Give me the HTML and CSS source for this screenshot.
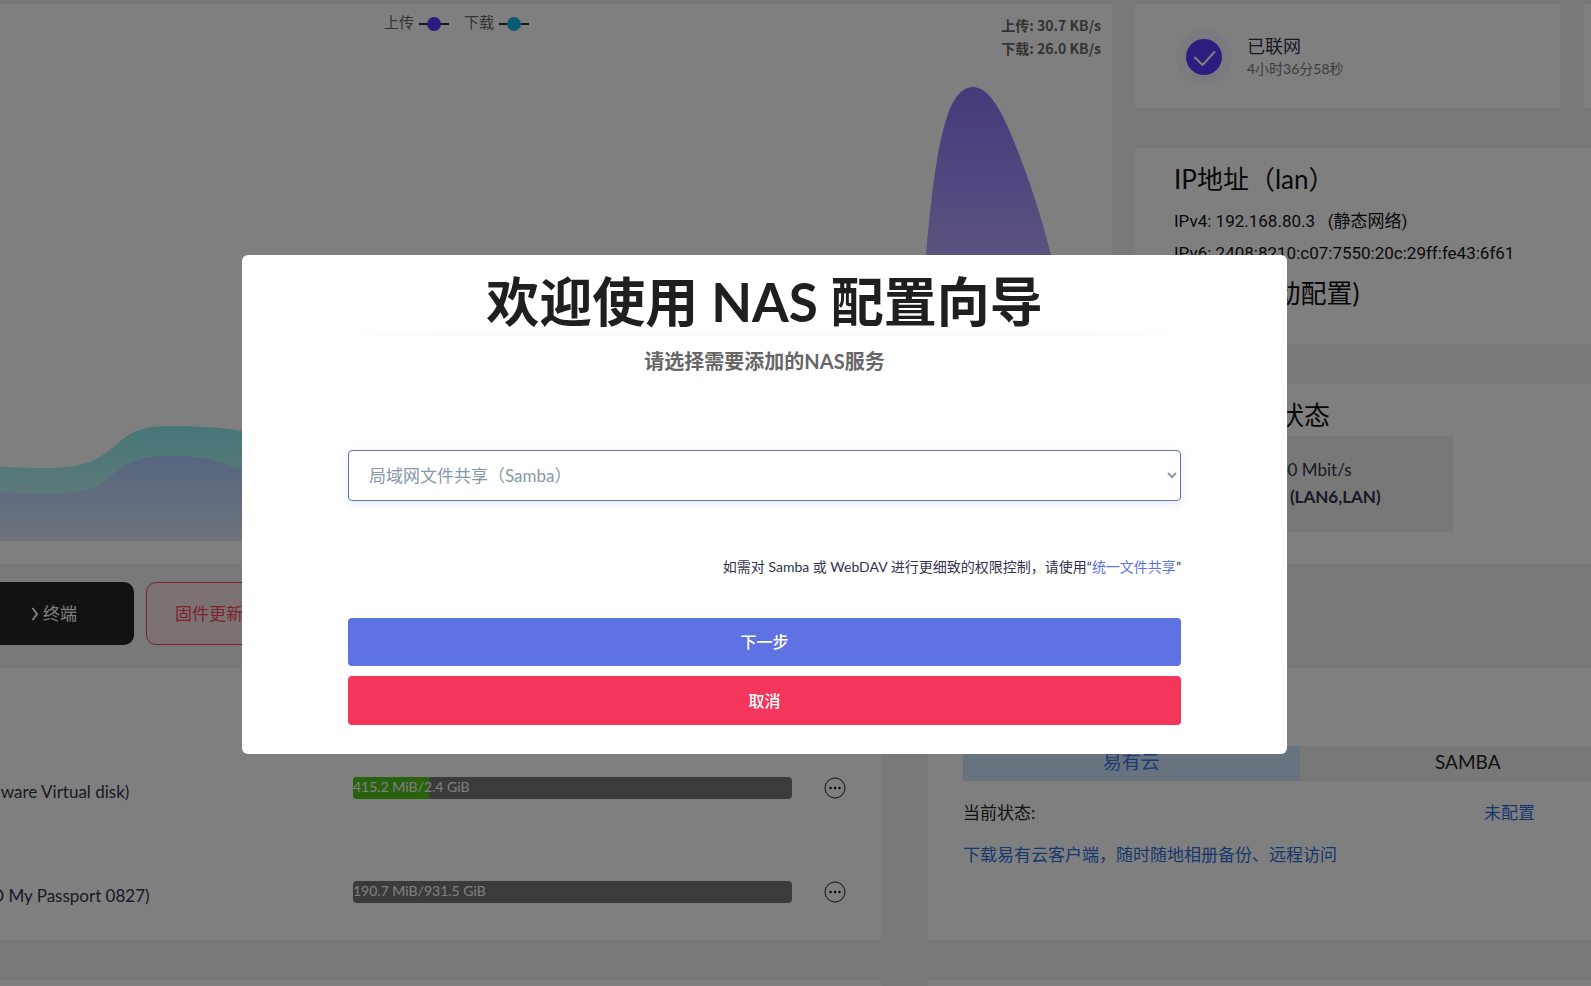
FILE: index.html
```html
<!DOCTYPE html>
<html lang="zh-CN">
<head>
<meta charset="utf-8">
<meta name="viewport" content="width=device-width, initial-scale=1">
<title>NAS 配置向导</title>
<link rel="stylesheet" href="styles.css">
</head>
<body>
<div class="viewport">
<main class="page">
  <div class="overview">
    <section class="card traffic">
      <svg class="traffic-chart" viewBox="-36 4 1148 560" preserveAspectRatio="none" aria-hidden="true">
        <defs>
          <linearGradient id="peak" gradientUnits="userSpaceOnUse" x1="0" y1="87" x2="0" y2="541"><stop offset="0" stop-color="#8b74f8"/><stop offset="0.37" stop-color="#b9a5ff"/><stop offset="1" stop-color="#e6e0ff"/></linearGradient>
          <linearGradient id="down" gradientUnits="userSpaceOnUse" x1="0" y1="425" x2="0" y2="541"><stop offset="0" stop-color="#8eeeee"/><stop offset="1" stop-color="#d8f4fa"/></linearGradient>
          <linearGradient id="up" gradientUnits="userSpaceOnUse" x1="0" y1="456" x2="0" y2="541"><stop offset="0" stop-color="#aecaff"/><stop offset="1" stop-color="#dce8f6"/></linearGradient>
        </defs>
        <path fill="url(#down)" d="M-36 466C0 466 20 468 50 468C85 468 100 459 118 443C135 428 150 426 170 426C200 426 225 428 242 431C330 445 500 480 700 480V541H-36Z"/>
        <path fill="url(#up)" d="M-36 490C0 492 20 494 50 494C85 494 98 488 115 473C132 459 148 456 170 456C202 455 215 461 242 469C330 490 500 500 700 500V541H-36Z"/>
        <path fill="url(#peak)" d="M880 541C905 430 925 285 926 255C931 200 936 150 947 117C953 98 962 87 973 87C985 87 996 101 1006 123C1022 158 1040 210 1051 255C1070 340 1085 440 1112 541Z"/>
      </svg>
      <div class="legend">
        <span>上传</span><svg viewBox="0 0 30 16"><path d="M0 8H30"/><circle class="c-up" cx="15" cy="8" r="7"/></svg>
        <span class="legend-next">下载</span><svg viewBox="0 0 30 16"><path d="M0 8H30"/><circle class="c-down" cx="15" cy="8" r="7"/></svg>
      </div>
      <div class="rates"><div>上传: 30.7 KB/s</div><div>下载: 26.0 KB/s</div></div>
    </section>
    <div class="side">
      <div class="status-row">
        <section class="card status">
          <svg class="status-icon" viewBox="0 0 56 56" aria-hidden="true"><circle cx="28" cy="28" r="28" fill="#f7f4ff"/><circle cx="28" cy="28" r="18" fill="#5a3bff"/><path d="M19 28.500L26.500 36L38.500 23" fill="none" stroke="#fff" stroke-width="2" stroke-linecap="round" stroke-linejoin="round"/></svg>
          <div><div class="status-name">已联网</div><div class="status-time">4小时36分58秒</div></div>
        </section>
        <section class="card"></section>
      </div>
      <section class="card address">
        <h2>IP地址（lan）</h2>
        <p>IPv4: 192.168.80.3 &nbsp; (静态网络)</p>
        <p>IPv6: 2408:8210:c07:7550:20c:29ff:fe43:6f61</p>
        <h2>/64 （自动配置)</h2>
      </section>
      <section class="card ports">
        <h2>网络端口状态</h2>
        <div class="port"><div>1000 Mbit/s</div><div class="port-name"><b>eth</b><b>(LAN6,LAN)</b></div></div>
      </section>
    </div>
  </div>

  <div class="actions">
    <button class="action dark" type="button"><svg viewBox="0 0 8 14" aria-hidden="true"><path d="M1.500 1L6 7L1.500 13"/></svg>终端</button>
    <button class="action red" type="button">固件更新</button>
  </div>

  <div class="lower">
    <section class="card disks">
      <div class="disk">
        <div class="disk-name">(VMware Virtual disk)</div>
        <div class="bar"><div class="bar-fill" style="width:17.3%"></div><span>415.2 MiB/2.4 GiB</span></div>
        <button class="more" type="button" aria-label="更多"><svg viewBox="0 0 22 22"><circle class="ring" cx="11" cy="11" r="10"/><circle cx="6.500" cy="11" r="1.200"/><circle cx="11" cy="11" r="1.200"/><circle cx="15.500" cy="11" r="1.200"/></svg></button>
      </div>
      <div class="disk">
        <div class="disk-name">(WD My Passport 0827)</div>
        <div class="bar"><span>190.7 MiB/931.5 GiB</span></div>
        <button class="more" type="button" aria-label="更多"><svg viewBox="0 0 22 22"><circle class="ring" cx="11" cy="11" r="10"/><circle cx="6.500" cy="11" r="1.200"/><circle cx="11" cy="11" r="1.200"/><circle cx="15.500" cy="11" r="1.200"/></svg></button>
      </div>
    </section>
    <section class="card services">
      <div class="tabs"><button class="tab active" type="button">易有云</button><button class="tab" type="button">SAMBA</button></div>
      <div class="service-state"><span>当前状态:</span><a href="#">未配置</a></div>
      <a class="service-link" href="#">下载易有云客户端，随时随地相册备份、远程访问</a>
    </section>
    <section class="card next"></section>
    <section class="card next"></section>
  </div>
</main>
</div>

<div class="overlay">
  <form class="modal" role="dialog" aria-modal="true" aria-labelledby="wizard-title">
    <h1 id="wizard-title">欢迎使用 NAS 配置向导</h1>
    <div class="divider"></div>
    <label class="subtitle" for="service">请选择需要添加的NAS服务</label>
    <select id="service"><option>局域网文件共享（Samba）</option></select>
    <p class="note">如需对 Samba 或 WebDAV 进行更细致的权限控制，请使用“<a href="#">统一文件共享</a>”</p>
    <button class="submit primary" type="button">下一步</button>
    <button class="submit cancel" type="button">取消</button>
  </form>
</div>
</body>
</html>
```
FILE: styles.css
```css
* { box-sizing: border-box; }
body {
  margin: 0;
  background: #f3f3f3;
  color: #32324d;
  font: 17px/24px Lato, "Noto Sans CJK SC", sans-serif;
}
h1, h2, p { margin: 0; }
button { font: inherit; border: 0; cursor: pointer; }
a { color: inherit; text-decoration: none; }

.viewport { height: 100vh; overflow: hidden; }
.page { margin: 0 -80px 0 -36px; padding-top: 4px; }
.card { background: #fff; }

.overview { display: grid; grid-template-columns: 1148fr 536fr; gap: 23px; }
.traffic { position: relative; display: flex; justify-content: space-between; align-items: flex-start; padding: 6px 11px 0 420px; }
.traffic-chart { position: absolute; inset: 0; width: 100%; height: 100%; }
.legend { position: relative; display: flex; align-items: center; gap: 5px; font-size: 15px; color: #666; }
.legend svg { width: 30px; height: 16px; margin-top: 3px; }
.legend path { stroke: #333; stroke-width: 2; }
.legend .c-up { fill: #5a38ff; }
.legend .c-down { fill: #12bbe4; }
.legend-next { margin-left: 10px; }
.rates { position: relative; padding-top: 4px; font: bold 14px/23px "Noto Sans CJK SC", sans-serif; color: #666; }

.side { display: flex; flex-direction: column; gap: 40px; }
.status-row { display: grid; grid-template-columns: 425fr 87fr; gap: 24px; }
.status { min-height: 104px; display: flex; align-items: center; gap: 15px; padding: 2px 41px 0; }
.status-icon { width: 56px; height: 56px; }
.status-name { font-size: 18px; line-height: 24px; }
.status-time { font-size: 14px; line-height: 22px; color: #777; }

.address, .ports { padding: 13px 39px 0; color: #111; }
.address { min-height: 196px; }
.address p { font-family: Roboto, "Noto Sans CJK SC", sans-serif; line-height: 32px; }
h2 { font-size: 26px; line-height: 36px; font-weight: 400; }
.address h2:first-child { margin-bottom: 8px; }
.address h2:last-child { margin-top: 6px; }
.ports { min-height: 180px; }
.port { width: 279px; height: 96px; margin-top: 3px; padding: 20px 0 0 84px; background: #f0f0f0; line-height: 27px; color: #32324d; }
.port-name { display: flex; gap: 7px; }

.actions { display: flex; gap: 12px; padding: 18px 10px 23px; }
.action { height: 63px; border-radius: 10px; }
.dark { display: flex; align-items: center; justify-content: center; gap: 4px; width: 160px; background: #242424; color: #fff; }
.dark svg { width: 8px; height: 14px; }
.dark path { fill: none; stroke: #fff; stroke-width: 2; }
.red { padding: 0 28px; border: 1px solid #f5465c; background: #fbe4e4; color: #f5465c; }

.lower { display: grid; grid-template-columns: 917fr 743fr; gap: 40px 47px; }
.disks { min-height: 272px; display: flex; flex-direction: column; gap: 52px; padding: 94px 35px 0 5px; }
.disk { display: grid; grid-template-columns: 384px 1fr 22px; align-items: center; height: 52px; }
.disk-name { padding-top: 8px; }
.bar { position: relative; height: 22px; margin-right: 32px; border-radius: 4px; overflow: hidden; background: #767676; color: #fff; font-size: 14px; line-height: 20px; }
.bar-fill { position: absolute; inset: 0 auto 0 0; background: #52c41a; }
.bar span { position: relative; }
.more { width: 22px; height: 22px; padding: 0; background: none; }
.more svg { display: block; width: 22px; height: 22px; }
.more .ring { fill: none; stroke: #222; stroke-width: 1; }

.services { padding: 78px 35px 0; }
.tabs { display: grid; grid-template-columns: 1fr 1fr; }
.tab { height: 35px; padding: 0 0 4px; background: #f0f0f0; color: #222; font-size: 19px; }
.tab.active { background: #d2e6ff; color: #3c78e0; }
.service-state { display: flex; justify-content: space-between; margin: 20px 101px 18px 0; color: #222; }
.service-state a, .service-link { color: #2f6fd8; }
.next { height: 60px; }

.overlay { position: fixed; inset: 0; display: flex; align-items: center; justify-content: center; padding: 23px 62px 0 0; background: rgba(0, 0, 0, .5); }
.modal { display: flex; flex-direction: column; width: 100%; max-width: 1045px; padding: 17px 106px 29px; border-radius: 6px; background: #fff; }
h1 { font-size: 53px; line-height: 60px; text-align: center; color: #1f1f1f; }
.divider { height: 4px; background: linear-gradient(90deg, #fff, #fafafa 10%, #fafafa 90%, #fff); }
.subtitle { margin: 10px 0 74px; line-height: 30px; font-size: 20px; font-weight: 700; text-align: center; color: #666; }
select { height: 51px; padding: 0 0 0 16px; border: 1px solid #6474b4; border-radius: 4px; background: #fff; color: #8898aa; font: inherit; box-shadow: 0 3px 8px rgba(94, 114, 228, .15); }
.note { margin: 54px 0 39px; font-size: 14px; text-align: right; }
.note a { color: #5e72e4; }
.submit { height: 48px; border-radius: 4px; color: #fff; font-size: 16px; font-weight: 500; }
.primary { background: #5e72e4; }
.cancel { height: 49px; margin-top: 10px; background: #f5365c; }
```
